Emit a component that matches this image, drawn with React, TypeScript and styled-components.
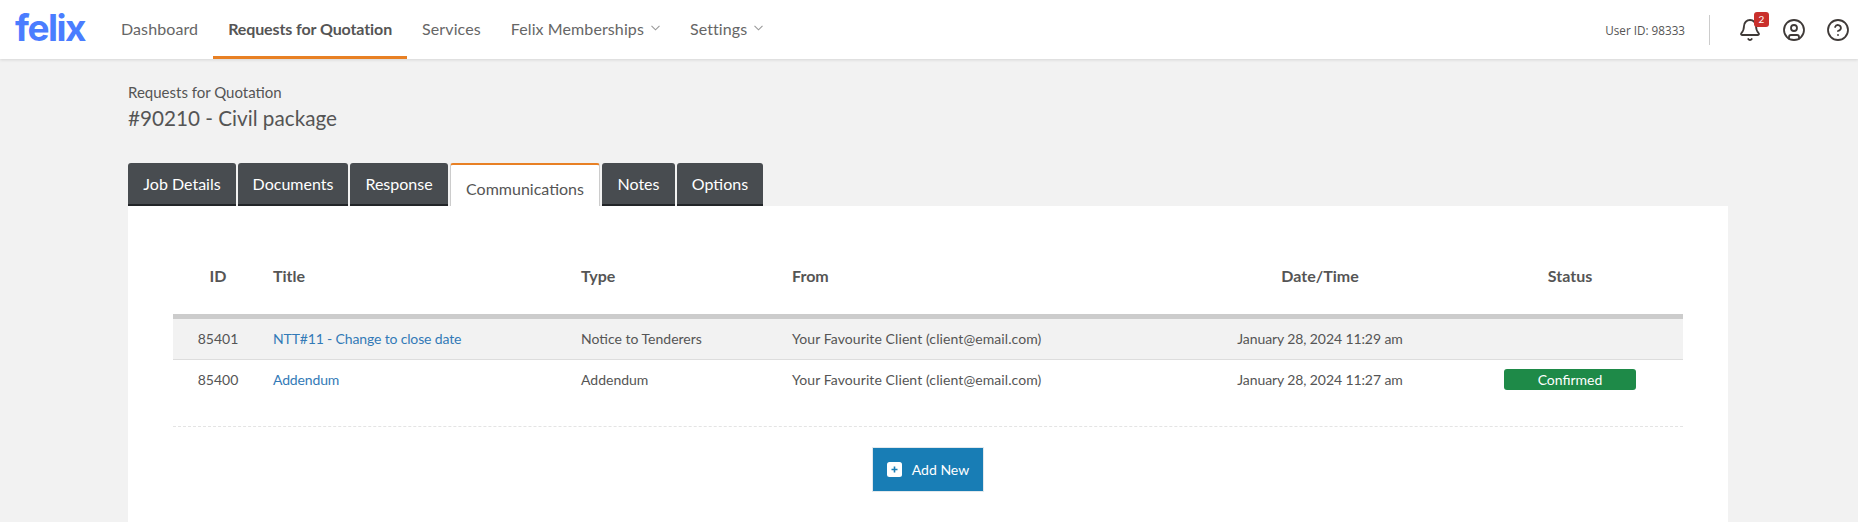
import styled, { createGlobalStyle } from "styled-components";
import { Bell, CircleHelp, CircleUser } from "lucide-react";

const GlobalStyle = createGlobalStyle`
  html, body {
    margin: 0;
    padding: 0;
    height: 100%;
    background: #f2f2f2;
    overflow: hidden;
  }
  body {
    font-family: Lato, "Liberation Sans", sans-serif;
    color: #555;
  }
`;

const Header = styled.header`
  height: 59px;
  box-sizing: border-box;
  background: #fff;
  box-shadow: 0 1px 3px rgba(0, 0, 0, 0.12);
  display: flex;
  align-items: stretch;
  padding-left: 15px;
  position: relative;
`;

const Logo = styled.div`
  width: 91px;
  font-family: Inter, sans-serif;
  font-weight: 700;
  font-size: 37px;
  letter-spacing: -1.5px;
  line-height: 55px;
  color: #4a7dff;
`;

const Nav = styled.nav`
  display: flex;
  align-items: stretch;
`;

const NavItem = styled.a<{ $active?: boolean }>`
  display: flex;
  align-items: center;
  gap: 7px;
  padding: 0 15px;
  font-size: 16px;
  font-weight: ${(p) => (p.$active ? 700 : 400)};
  letter-spacing: ${(p) => (p.$active ? "-0.1px" : "0.1px")};
  color: ${(p) => (p.$active ? "#555" : "#666")};
  border-bottom: 3px solid ${(p) => (p.$active ? "#e88024" : "transparent")};
  box-sizing: border-box;
`;

const Chevron = () => (
  <svg width="9" height="6" viewBox="0 0 9 6" fill="none">
    <path d="M0.5 0.8 4.5 4.8 8.5 0.8" stroke="#999" strokeWidth="1.1" />
  </svg>
);

const HeaderRight = styled.div`
  margin-left: auto;
  display: flex;
  align-items: center;
`;

const UserId = styled.span`
  font-family: "Open Sans", sans-serif;
  font-size: 11.7px;
  color: #555;
  margin-right: 24px;
`;

const Divider = styled.div`
  width: 1px;
  height: 30px;
  background: #ccc;
  margin-right: 28px;
`;

const IconSlot = styled.div`
  position: relative;
  width: 24px;
  height: 24px;
  margin-right: 20px;
  color: #3f3a38;

  &:last-child {
    margin-right: 8px;
  }
`;

const Count = styled.span`
  position: absolute;
  top: -6px;
  left: 16px;
  width: 15px;
  height: 15px;
  border-radius: 3px;
  background: #c9302c;
  color: #fff;
  font-size: 10px;
  line-height: 15px;
  text-align: center;
`;

const Main = styled.main`
  width: 1600px;
  margin-left: 128px;
  padding-top: 23px;
`;

const Crumb = styled.div`
  font-size: 15px;
  line-height: 21px;
  color: #555;
`;

const Title = styled.h1`
  margin: 0;
  font-size: 20.7px;
  font-weight: 400;
  line-height: 30px;
  color: #555;
`;

const Tabs = styled.div`
  display: flex;
  gap: 2px;
  margin-top: 30px;
`;

const Tab = styled.div<{ $active?: boolean; $width: number }>`
  width: ${(p) => p.$width}px;
  height: 43px;
  box-sizing: border-box;
  border-radius: 3px 3px 0 0;
  display: flex;
  justify-content: center;
  align-items: center;
  font-size: 16px;
  background: ${(p) => (p.$active ? "#fff" : "#484c50")};
  color: ${(p) => (p.$active ? "#555" : "#fff")};
  border-bottom: ${(p) => (p.$active ? "0" : "2px solid #222528")};
  border-top: ${(p) => (p.$active ? "2px solid #e88024" : "0")};
  border-left: ${(p) => (p.$active ? "1px solid #ccc" : "0")};
  border-right: ${(p) => (p.$active ? "1px solid #ccc" : "0")};
  padding-top: ${(p) => (p.$active ? "5px" : "0")};
`;

const Panel = styled.section`
  background: #fff;
  height: 316px;
  padding: 0 45px;
`;

const Table = styled.table`
  width: 1510px;
  table-layout: fixed;
  border-collapse: collapse;
`;

const Col = styled.col<{ $width: number }>`
  width: ${(p) => p.$width}px;
`;

const Th = styled.th<{ $center?: boolean }>`
  height: 110px;
  box-sizing: border-box;
  padding: 32px 10px 0;
  font-size: 16px;
  font-weight: 700;
  color: #555;
  text-align: ${(p) => (p.$center ? "center" : "left")};
  border-bottom: 5px solid #ccc;
`;

const Row = styled.tr<{ $shaded?: boolean }>`
  background: ${(p) => (p.$shaded ? "#f2f2f2" : "#fff")};
  border-bottom: ${(p) => (p.$shaded ? "1px solid #ddd" : "0")};
`;

const Td = styled.td<{ $center?: boolean; $tracking?: number }>`
  height: 40px;
  padding: 0 10px;
  font-size: 14px;
  color: #555;
  letter-spacing: ${(p) => p.$tracking ?? 0}px;
  text-align: ${(p) => (p.$center ? "center" : "left")};
`;

const TitleLink = styled.a`
  color: #337ab7;
  letter-spacing: -0.15px;
`;

const Badge = styled.span`
  display: block;
  width: 132px;
  height: 21px;
  margin: 0 auto;
  border-radius: 3px;
  background: #1e8a48;
  color: #fff;
  font-size: 14px;
  line-height: 21px;
  text-align: center;
`;

const Actions = styled.div`
  margin-top: 26px;
  border-top: 1px dashed #e4e4e4;
  padding-top: 20px;
  display: flex;
  justify-content: center;
`;

const AddButton = styled.button`
  width: 112px;
  height: 45px;
  box-sizing: border-box;
  border: 1px solid #e2e8ec;
  background: #187db5;
  color: #fff;
  font-family: inherit;
  font-size: 14px;
  display: flex;
  align-items: center;
  justify-content: center;
  gap: 10px;
`;

const PlusIcon = () => (
  <svg width="15" height="15" viewBox="0 0 15 15">
    <rect width="15" height="15" rx="2.5" fill="#fff" />
    <path d="M7.5 4.5v6M4.5 7.5h6" stroke="#187db5" strokeWidth="1.6" />
  </svg>
);

const rows = [
  {
    id: "85401",
    title: "NTT#11 - Change to close date",
    type: "Notice to Tenderers",
    date: "January 28, 2024 11:29 am",
    confirmed: false,
  },
  {
    id: "85400",
    title: "Addendum",
    type: "Addendum",
    date: "January 28, 2024 11:27 am",
    confirmed: true,
  },
];

const tabs: [string, number][] = [
  ["Job Details", 108],
  ["Documents", 110],
  ["Response", 98],
  ["Communications", 150],
  ["Notes", 73],
  ["Options", 86],
];

const App = () => {
  return (
    <>
      <GlobalStyle />
      <Header>
        <Logo>felix</Logo>
        <Nav>
          <NavItem>Dashboard</NavItem>
          <NavItem $active>Requests for Quotation</NavItem>
          <NavItem>Services</NavItem>
          <NavItem>
            Felix Memberships <Chevron />
          </NavItem>
          <NavItem>
            Settings <Chevron />
          </NavItem>
        </Nav>
        <HeaderRight>
          <UserId>User ID: 98333</UserId>
          <Divider />
          <IconSlot>
            <Bell size={24} strokeWidth={1.8} />
            <Count>2</Count>
          </IconSlot>
          <IconSlot>
            <CircleUser size={24} strokeWidth={1.8} />
          </IconSlot>
          <IconSlot>
            <CircleHelp size={24} strokeWidth={1.8} />
          </IconSlot>
        </HeaderRight>
      </Header>
      <Main>
        <Crumb>Requests for Quotation</Crumb>
        <Title>#90210 - Civil package</Title>
        <Tabs>
          {tabs.map(([name, width]) => (
            <Tab key={name} $width={width} $active={name === "Communications"}>
              {name}
            </Tab>
          ))}
        </Tabs>
        <Panel>
          <Table>
            <colgroup>
              <Col $width={90} />
              <Col $width={308} />
              <Col $width={211} />
              <Col $width={401} />
              <Col $width={274} />
              <Col $width={226} />
            </colgroup>
            <thead>
              <tr>
                <Th $center>ID</Th>
                <Th>Title</Th>
                <Th>Type</Th>
                <Th>From</Th>
                <Th $center>Date/Time</Th>
                <Th $center>Status</Th>
              </tr>
            </thead>
            <tbody>
              {rows.map((row, i) => (
                <Row key={row.id} $shaded={i === 0}>
                  <Td $center>{row.id}</Td>
                  <Td>
                    <TitleLink>{row.title}</TitleLink>
                  </Td>
                  <Td>{row.type}</Td>
                  <Td $tracking={0.09}>Your Favourite Client (client@email.com)</Td>
                  <Td $center $tracking={-0.1}>
                    {row.date}
                  </Td>
                  <Td $center>{row.confirmed && <Badge>Confirmed</Badge>}</Td>
                </Row>
              ))}
            </tbody>
          </Table>
          <Actions>
            <AddButton>
              <PlusIcon />
              Add New
            </AddButton>
          </Actions>
        </Panel>
      </Main>
    </>
  );
};

export default App;
